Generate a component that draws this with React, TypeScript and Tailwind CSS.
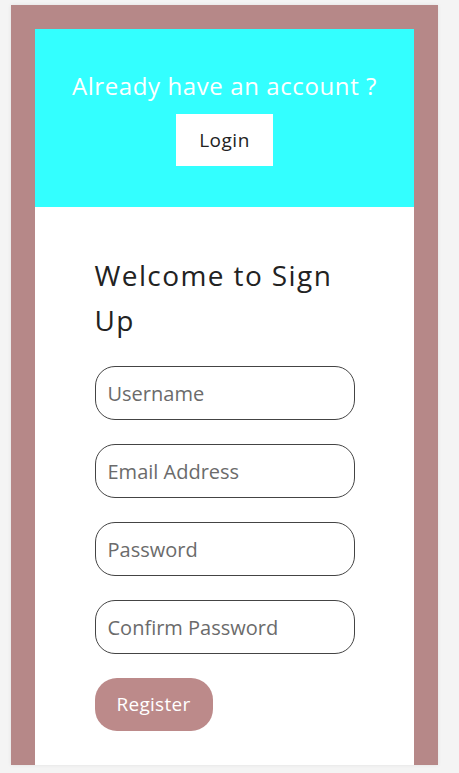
import React from "react";

export default function App() {
  const font = { fontFamily: '"Open Sans", "Liberation Sans", sans-serif' };
  const inputs = ["Username", "Email Address", "Password", "Confirm Password"];
  return (
    <div className="min-h-[773px] bg-[#f4f4f4] pt-[5px] pl-[11px]" style={font}>
      <div className="w-[427px] bg-[#b68888] px-6 pt-6 shadow-[0_0_4px_rgba(0,0,0,0.08)]">
        <div className="flex h-[178px] flex-col items-center bg-[#33ffff] pt-[40px]">
          <h2 className="text-[24px] leading-[34px] tracking-[0.6px] text-white">Already have an account ?</h2>
          <button className="mt-[11px] h-[52px] w-[97px] bg-white text-[19px] tracking-[0.5px] text-[#222]">Login</button>
        </div>
        <div className="h-[558px] bg-white pt-[46px]">
          <div className="mx-auto w-[260px]">
            <h1 className="text-[28px] leading-[45px] tracking-[1.4px] text-[#222]">Welcome to Sign Up</h1>
            <div className="mt-[23px] flex flex-col gap-6">
              {inputs.map((p) => (
                <input
                  key={p}
                  placeholder={p}
                  className="h-[54px] w-full rounded-[20px] border border-[#444] px-3 text-[20px] text-[#222] outline-none placeholder:text-[#6b6b6b]"
                />
              ))}
              <button className="h-[53px] w-[118px] rounded-[22px] bg-[#bc8a8a] text-[19px] tracking-[0.3px] text-white">Register</button>
            </div>
          </div>
        </div>
      </div>
    </div>
  );
}
